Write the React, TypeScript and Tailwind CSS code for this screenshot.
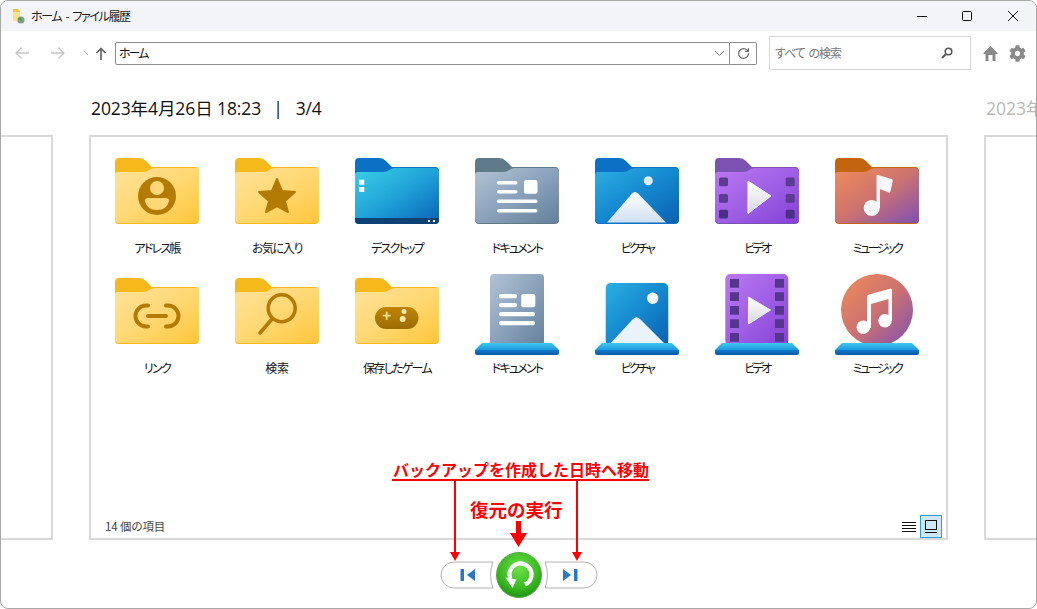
import type { ReactNode } from "react";
import { FaCog } from "react-icons/fa";
import { RotateCw } from "lucide-react";

const jp = "font-['Noto_Sans_CJK_JP',sans-serif] [font-feature-settings:'palt']";

function Defs() {
  const grad = (id: string, stops: string[], x2 = 1, y2 = 1) => (
    <linearGradient id={id} x1="0" y1="0" x2={x2} y2={y2}>
      {stops.map((c, i) => (
        <stop key={c} offset={i / (stops.length - 1)} stopColor={c} />
      ))}
    </linearGradient>
  );
  return (
    <svg className="absolute h-0 w-0" aria-hidden="true">
      <defs>
        {grad("yellow", ["#ffe29a", "#ffd873", "#ffc63a"])}
        {grad("desk", ["#3bd0e6", "#1fa2d8", "#0a62b4"])}
        {grad("doc", ["#b2c3d5", "#8ba2bb", "#64809a"])}
        {grad("pic", ["#2bb0e2", "#1588cf", "#0a60b2"])}
        {grad("vid", ["#ba78f0", "#a060e6", "#8440d6"])}
        {grad("mus", ["#f08c58", "#cd7270", "#7e50b4"])}
        {grad("snow", ["#ffffff", "#cfe0f4"], 0, 1)}
        {grad("base", ["#40c8f0", "#1c98de"], 0, 1)}
        {grad("baseDark", ["#0e7cd0", "#0a58a6"], 0, 1)}
        {grad("play", ["#ffffff", "#d8d6de"], 0, 1)}
        {grad("pad", ["#bf8405", "#9c6c04"], 0, 1)}
      </defs>
    </svg>
  );
}

function Folder({ back, front, children }: { back: string; front: string; children?: ReactNode }) {
  return (
    <svg width="84" height="86" viewBox="0 0 84 86">
      <g transform="translate(0 4)">
        <path d="M0 4Q0 0 4 0H24Q28 0 31 3L37 9H80Q84 9 84 13V62Q84 66 80 66H4Q0 66 0 62Z" fill={back} />
        <path d="M0 17Q0 14 3 14H28Q32 14 35 11.500Q37 10 40 10H81Q84 10 84 13V61Q84 65 80 65H4Q0 65 0 61Z" fill={`url(#${front})`} />
        {children}
      </g>
    </svg>
  );
}

function Library({ children }: { children: ReactNode }) {
  return (
    <svg width="84" height="86" viewBox="0 0 84 86">
      {children}
      <path d="M7 69H77L84 76H0Z" fill="url(#base)" />
      <path d="M0 76H84V79Q84 81 82 81H2Q0 81 0 79Z" fill="url(#baseDark)" />
    </svg>
  );
}

const gold = "#b47b04";

const items: { label: string; track: string; icon: ReactNode }[] = [
  {
    label: "アドレス帳",
    track: "tracking-[-1.8px]",
    icon: (
      <Folder back="#f6b91c" front="yellow">
        <circle cx="42" cy="38" r="19" fill={gold} />
        <circle cx="42" cy="30" r="7" fill="#ffd778" />
        <path d="M33 40H51Q54 40 54 43Q52 52 42 52Q32 52 30 43Q30 40 33 40Z" fill="#ffd778" />
      </Folder>
    ),
  },
  {
    label: "お気に入り",
    track: "tracking-[-1.4px]",
    icon: (
      <Folder back="#f6b91c" front="yellow">
        <path
          d="M42 21L47 33L60 34L50 43L53 54L42 48L31 54L34 43L24 34L37 33Z"
          fill={gold}
          stroke={gold}
          strokeWidth="2"
          strokeLinejoin="round"
        />
      </Folder>
    ),
  },
  {
    label: "デスクトップ",
    track: "tracking-[-1.8px]",
    icon: (
      <Folder back="#0c70c4" front="desk">
        <path d="M0 60H84V62Q84 66 80 66H4Q0 66 0 62Z" fill="#0f4274" />
        <rect x="4.300" y="21.700" width="5" height="5" fill="#fff" />
        <rect x="4.300" y="29" width="5" height="5" fill="#fff" />
        <rect x="73" y="62" width="2" height="2" fill="#fff" />
        <rect x="78" y="62" width="2" height="2" fill="#fff" />
      </Folder>
    ),
  },
  {
    label: "ドキュメント",
    track: "tracking-[-1.8px]",
    icon: (
      <Folder back="#5f7a88" front="doc">
        <rect x="22" y="23" width="20.500" height="3.500" rx="1.700" fill="#fff" />
        <rect x="22" y="32" width="20.500" height="3.500" rx="1.700" fill="#fff" />
        <rect x="22" y="41.500" width="40.500" height="3.500" rx="1.700" fill="#fff" />
        <rect x="22" y="51" width="40.500" height="3.500" rx="1.700" fill="#fff" />
        <rect x="49" y="22" width="13.500" height="13.700" rx="2" fill="#fff" />
      </Folder>
    ),
  },
  {
    label: "ピクチャ",
    track: "tracking-[-2.5px]",
    icon: (
      <Folder back="#0c70c4" front="pic">
        <circle cx="53.300" cy="22.700" r="4.500" fill="#dcecf8" />
        <path d="M12 64.500L37 35.500Q40 32.500 43 35.500L71 64.500Z" fill="url(#snow)" />
      </Folder>
    ),
  },
  {
    label: "ビデオ",
    track: "tracking-[-2.7px]",
    icon: (
      <Folder back="#7a52b2" front="vid">
        {[19.500, 36, 51.700].map((y) => (
          <g key={y} fill={y > 50 ? "#4a2f86" : "#5c3b92"}>
            <rect x="4" y={y} width="9" height="8.700" rx="1.500" />
            <rect x="70.700" y={y} width="9" height="8.700" rx="1.500" />
          </g>
        ))}
        <path d="M33 23L56 38L33 55.500Z" fill="url(#play)" stroke="#fff" strokeWidth="1" strokeLinejoin="round" />
      </Folder>
    ),
  },
  {
    label: "ミュージック",
    track: "tracking-[-2.5px]",
    icon: (
      <Folder back="#c2650e" front="mus">
        <circle cx="36.700" cy="50" r="8" fill="#f5f7fb" />
        <path d="M41.500 18Q41.500 16.500 43 17L56.500 21Q58 21.500 57.700 23L55.500 33.500Q55 35 53.500 34.500L45 31V50H41.500Z" fill="#f5f7fb" />
      </Folder>
    ),
  },
  {
    label: "リンク",
    track: "tracking-[-1.7px]",
    icon: (
      <Folder back="#f6b91c" front="yellow">
        <path
          d="M33 27.500H31A10.500 10.500 0 0 0 31 48.500H33M51 27.500H53A10.500 10.500 0 0 1 53 48.500H51"
          fill="none"
          stroke={gold}
          strokeWidth="4"
          strokeLinecap="round"
        />
        <path d="M33 38H51" stroke={gold} strokeWidth="4" strokeLinecap="round" />
      </Folder>
    ),
  },
  {
    label: "検索",
    track: "tracking-[-0.2px]",
    icon: (
      <Folder back="#f6b91c" front="yellow">
        <circle cx="46.700" cy="30.300" r="13.500" fill="none" stroke={gold} strokeWidth="3.600" />
        <path d="M37 41L25 55" stroke={gold} strokeWidth="3.600" strokeLinecap="round" />
      </Folder>
    ),
  },
  {
    label: "保存したゲーム",
    track: "tracking-[-1.7px]",
    icon: (
      <Folder back="#f6b91c" front="yellow">
        <rect x="20" y="29" width="43.500" height="22" rx="11" fill="url(#pad)" />
        <path d="M31.700 33.700V41.700M27.700 37.700H35.700" stroke="#ffdf8e" strokeWidth="1.800" />
        <circle cx="49" cy="33.500" r="2.500" fill="#ffe6a6" />
        <circle cx="47.700" cy="41" r="3" fill="#ffe6a6" />
      </Folder>
    ),
  },
  {
    label: "ドキュメント",
    track: "tracking-[-1.8px]",
    icon: (
      <Library>
        <rect x="15" y="0" width="54" height="72" rx="4" fill="url(#doc)" />
        <rect x="24" y="20" width="18" height="4.300" rx="2" fill="#fff" />
        <rect x="24" y="29" width="18" height="4.300" rx="2" fill="#fff" />
        <rect x="24" y="38" width="36" height="4.300" rx="2" fill="#fff" />
        <rect x="24" y="47" width="36" height="4.300" rx="2" fill="#fff" />
        <rect x="46.300" y="20" width="14" height="13.300" rx="2" fill="#fff" />
      </Library>
    ),
  },
  {
    label: "ピクチャ",
    track: "tracking-[-2.5px]",
    icon: (
      <Library>
        <rect x="10.700" y="9" width="62.600" height="63" rx="5" fill="url(#pic)" />
        <circle cx="57.700" cy="24.300" r="5.700" fill="#f2f7fc" />
        <path d="M13 72L38 45Q41.500 41.500 45 45L72 72Z" fill="#eaf3fc" />
      </Library>
    ),
  },
  {
    label: "ビデオ",
    track: "tracking-[-2.7px]",
    icon: (
      <Library>
        <rect x="10.300" y="0" width="63" height="72" rx="5" fill="url(#vid)" />
        {[5, 18.300, 32, 45.300, 59].map((y) => (
          <g key={y} fill="#55358e">
            <rect x="15" y={y} width="9" height="8.700" />
            <rect x="60" y={y} width="9" height="8.700" />
          </g>
        ))}
        <path d="M33.500 23L55.500 36L33.500 50Z" fill="url(#play)" stroke="#eee" strokeWidth="1" strokeLinejoin="round" />
      </Library>
    ),
  },
  {
    label: "ミュージック",
    track: "tracking-[-2.5px]",
    icon: (
      <Library>
        <circle cx="42" cy="36" r="36" fill="url(#mus)" />
        <circle cx="28.300" cy="53.300" r="6.700" fill="#fff" />
        <circle cx="50" cy="46.700" r="6.700" fill="#fff" />
        <path d="M32 23Q32 21 34 20.500L55 14.700Q57 14 57 16.500V47H53.500V25L36 30V54H32Z" fill="#fff" />
      </Library>
    ),
  },
];

function WindowButtons() {
  return (
    <div className="flex h-full items-center">
      <svg className="mr-[33px]" width="12" height="12" viewBox="0 0 12 12" stroke="#111" fill="none">
        <path d="M1 6.500H11" />
      </svg>
      <svg className="mr-[34px]" width="12" height="12" viewBox="0 0 12 12" stroke="#111" fill="none">
        <rect x="1.500" y="1.500" width="9" height="9" rx="1" />
      </svg>
      <svg className="mr-[17px]" width="12" height="12" viewBox="0 0 12 12" stroke="#111" fill="none">
        <path d="M1 1L11 11M11 1L1 11" />
      </svg>
    </div>
  );
}

function Pill({ side }: { side: "left" | "right" }) {
  return (
    <button type="button" aria-label={side === "left" ? "前へ" : "次へ"} className="block">
      <svg
        className={side === "right" ? "-scale-x-100" : ""}
        width="54"
        height="28"
        viewBox="0 0 54 28"
        fill="#fff"
      >
        <path d="M14 1H53Q48 14 53 27H14A13 13 0 0 1 14 1Z" stroke="#b4b4b4" />
        <rect x="20.500" y="8" width="3.500" height="12" fill="#2878c8" />
        <path d="M27 14L35 8V20Z" fill="#2878c8" />
      </svg>
    </button>
  );
}

function RestoreButton() {
  return (
    <button type="button" aria-label="復元" className="block">
      <svg width="46" height="46" viewBox="0 0 46 46">
        <defs>
          <radialGradient id="green" cx="0.500" cy="0.350" r="0.700">
            <stop offset="0" stopColor="#6ee04a" />
            <stop offset="0.600" stopColor="#3cbc22" />
            <stop offset="1" stopColor="#188a10" />
          </radialGradient>
        </defs>
        <circle cx="23" cy="23" r="22.500" fill="url(#green)" stroke="#5aa84c" />
        <path d="M29 32.500A11 11 0 1 0 14.500 27" fill="none" stroke="#fff" strokeWidth="4.200" />
        <path d="M9.500 25.500L20.500 27.500L16.500 36Z" fill="#fff" />
      </svg>
    </button>
  );
}

function Annotations() {
  return (
    <>
      <div className="absolute left-[392px] top-[458px] whitespace-nowrap font-['Noto_Sans_CJK_JP',sans-serif] text-[16px] font-bold leading-[20px] text-[#ff0000] [font-feature-settings:normal]">
        バックアップを作成した日時へ移動
      </div>
      <div className="absolute left-[469px] top-[496px] whitespace-nowrap font-['Noto_Sans_CJK_JP',sans-serif] text-[18.500px] font-bold leading-[24px] text-[#ff0000] [font-feature-settings:normal]">
        復元の実行
      </div>
      <svg className="absolute left-[-1px] top-[-1px]" width="1037" height="609" fill="#ff0000" aria-hidden="true">
        <rect x="392" y="479" width="257" height="2" />
        <rect x="454" y="480" width="2" height="73" />
        <path d="M450 552H460L455 561Z" />
        <rect x="576" y="480" width="2" height="73" />
        <path d="M572 552H582L577 561Z" />
        <path d="M516 521H521V533H527L518.500 547L510 533H516Z" />
      </svg>
    </>
  );
}

export default function App() {
  return (
    <div className={`relative flex h-[609px] w-[1037px] flex-col overflow-hidden rounded-[8px] border border-[#a8a8a8] bg-white ${jp}`}>
      <Defs />
      {/* title bar */}
      <div className="flex h-[30px] shrink-0 items-center justify-between bg-[#f3f4f8]">
        <div className="flex items-center">
          <svg className="ml-[11px] mr-[5px]" width="14" height="16" viewBox="0 0 14 16">
            <path d="M1 1H6L8 3V13H1Z" fill="#f6c94c" />
            <path d="M1 4H8V13H1Z" fill="#ffe08a" />
            <circle cx="9" cy="12" r="3.500" fill="#8a9a8a" />
            <circle cx="8" cy="11" r="1.500" fill="#3cae3c" />
          </svg>
          <span className="text-[12px] leading-none tracking-[-1.4px] text-[#1c1c1c] [word-spacing:3px]">ホーム - ファイル履歴</span>
        </div>
        <WindowButtons />
      </div>

      {/* toolbar */}
      <div className="flex h-[44px] shrink-0 items-center">
        <svg className="ml-[13px]" width="16" height="14" viewBox="0 0 16 14" fill="none" stroke="#c4c4c4" strokeWidth="1.300">
          <path d="M15 7H2M7.500 1.500L2 7L7.500 12.500" />
        </svg>
        <svg className="ml-[20px]" width="16" height="14" viewBox="0 0 16 14" fill="none" stroke="#c4c4c4" strokeWidth="1.300">
          <path d="M1 7H14M8.500 1.500L14 7L8.500 12.500" />
        </svg>
        <svg className="ml-[17px]" width="6" height="6" viewBox="0 0 6 6" fill="none" stroke="#bbb">
          <path d="M1 1L5 5" />
        </svg>
        <svg className="ml-[6px]" width="12" height="13" viewBox="0 0 12 13" fill="none" stroke="#666" strokeWidth="1.700">
          <path d="M6 13V2M1.500 6L6 1.500L10.500 6" />
        </svg>
        <div className="ml-[8px] flex h-[23px] w-[615px] items-center justify-between rounded-l-[2px] border border-[#8c8c8c] pl-[3px] pr-[4px] text-[12px] text-[#111]">
          <span className="tracking-[-2px]">ホーム</span>
          <svg width="11" height="7" viewBox="0 0 11 7" fill="none" stroke="#777">
            <path d="M1 1L5.500 5.500L10 1" />
          </svg>
        </div>
        <div className="flex h-[23px] w-[27px] items-center justify-center rounded-r-[2px] border border-l-0 border-[#8c8c8c]">
          <RotateCw size={13} strokeWidth={2.2} color="#666" />
        </div>
        <div className="ml-[12px] flex h-[34px] w-[202px] items-center justify-between border border-[#d9d9d9] pl-[5px] pr-[17px] text-[12px] tracking-[-1px] text-[#767676] [word-spacing:2px]">
          <span>すべて の検索</span>
          <svg width="12" height="12" viewBox="0 0 12 12" fill="none" stroke="#555" strokeWidth="1.600">
            <circle cx="7.500" cy="4.500" r="3.300" />
            <path d="M5 7L1 11" strokeWidth="2" />
          </svg>
        </div>
        <svg className="ml-[12px]" width="15" height="15" viewBox="0 0 14 15" fill="#8a8a8a">
          <path d="M7 0L14 7V8H12V15H9V9H5V15H2V8H0V7Z" />
        </svg>
        <FaCog size={17} color="#8a8a8a" className="ml-[11px]" />
      </div>

      {/* carousel */}
      <div className="grid min-h-0 flex-1 grid-cols-[52px_859px_1fr] gap-x-[36px]">
        <div className="flex flex-col">
          <div className="h-[60px]" />
          <div className="h-[405px] border-y-2 border-r-2 border-[#d9d9d9]" />
        </div>
        <div className="flex flex-col">
          <div className="flex h-[60px] items-center pl-[2px] pt-[6px] font-['Open_Sans','Noto_Sans_CJK_JP',sans-serif] text-[17.500px] tracking-[-0.1px] text-[#111] [font-feature-settings:normal]">
            2023年4月26日 18:23
            <span className="ml-[12px] mr-[13px]">|</span>
            3/4
          </div>
          <div className="flex h-[405px] flex-col border-2 border-[#d9d9d9]">
            <div className="grid auto-rows-[120px] grid-cols-[repeat(7,120px)] pl-[6px] pt-[17px]">
              {items.map((item, i) => (
                <div key={i} className="flex flex-col items-center">
                  {item.icon}
                  <span className={`h-[16px] text-[12px] leading-[16px] text-[#111] ${item.track}`}>{item.label}</span>
                </div>
              ))}
            </div>
            <div className="mt-auto flex h-[23px] items-center justify-between pl-[14px] pr-[4px]">
              <span className="text-[11.500px] tracking-[-0.1px] text-[#444]">14 個の項目</span>
              <div className="flex items-center gap-[4px]">
                <svg width="14" height="12" viewBox="0 0 14 12" stroke="#111" fill="none">
                  <path d="M0 1.500H14M0 4.500H14M0 7.500H14M0 10.500H14" />
                </svg>
                <div className="flex h-[23px] w-[22px] items-center justify-center border border-[#2a9fd8] bg-[#cfe6f6]">
                  <svg width="14" height="14" viewBox="0 0 14 14" stroke="#111" fill="none">
                    <rect x="1.500" y="0.500" width="11" height="9" />
                    <path d="M1 12.500H13" />
                  </svg>
                </div>
              </div>
            </div>
          </div>
        </div>
        <div className="flex min-w-0 flex-col">
          <div className="flex h-[60px] items-center whitespace-nowrap pl-[2px] pt-[6px] font-['Open_Sans','Noto_Sans_CJK_JP',sans-serif] text-[17.500px] text-[#b9b9b9]">
            2023年
          </div>
          <div className="h-[405px] border-y-2 border-l-2 border-[#d9d9d9]" />
        </div>
      </div>

      {/* restore controls */}
      <div className="absolute bottom-[10px] left-0 flex w-full items-center justify-center gap-[2px] pl-px">
        <Pill side="left" />
        <RestoreButton />
        <Pill side="right" />
      </div>

      <Annotations />
    </div>
  );
}
